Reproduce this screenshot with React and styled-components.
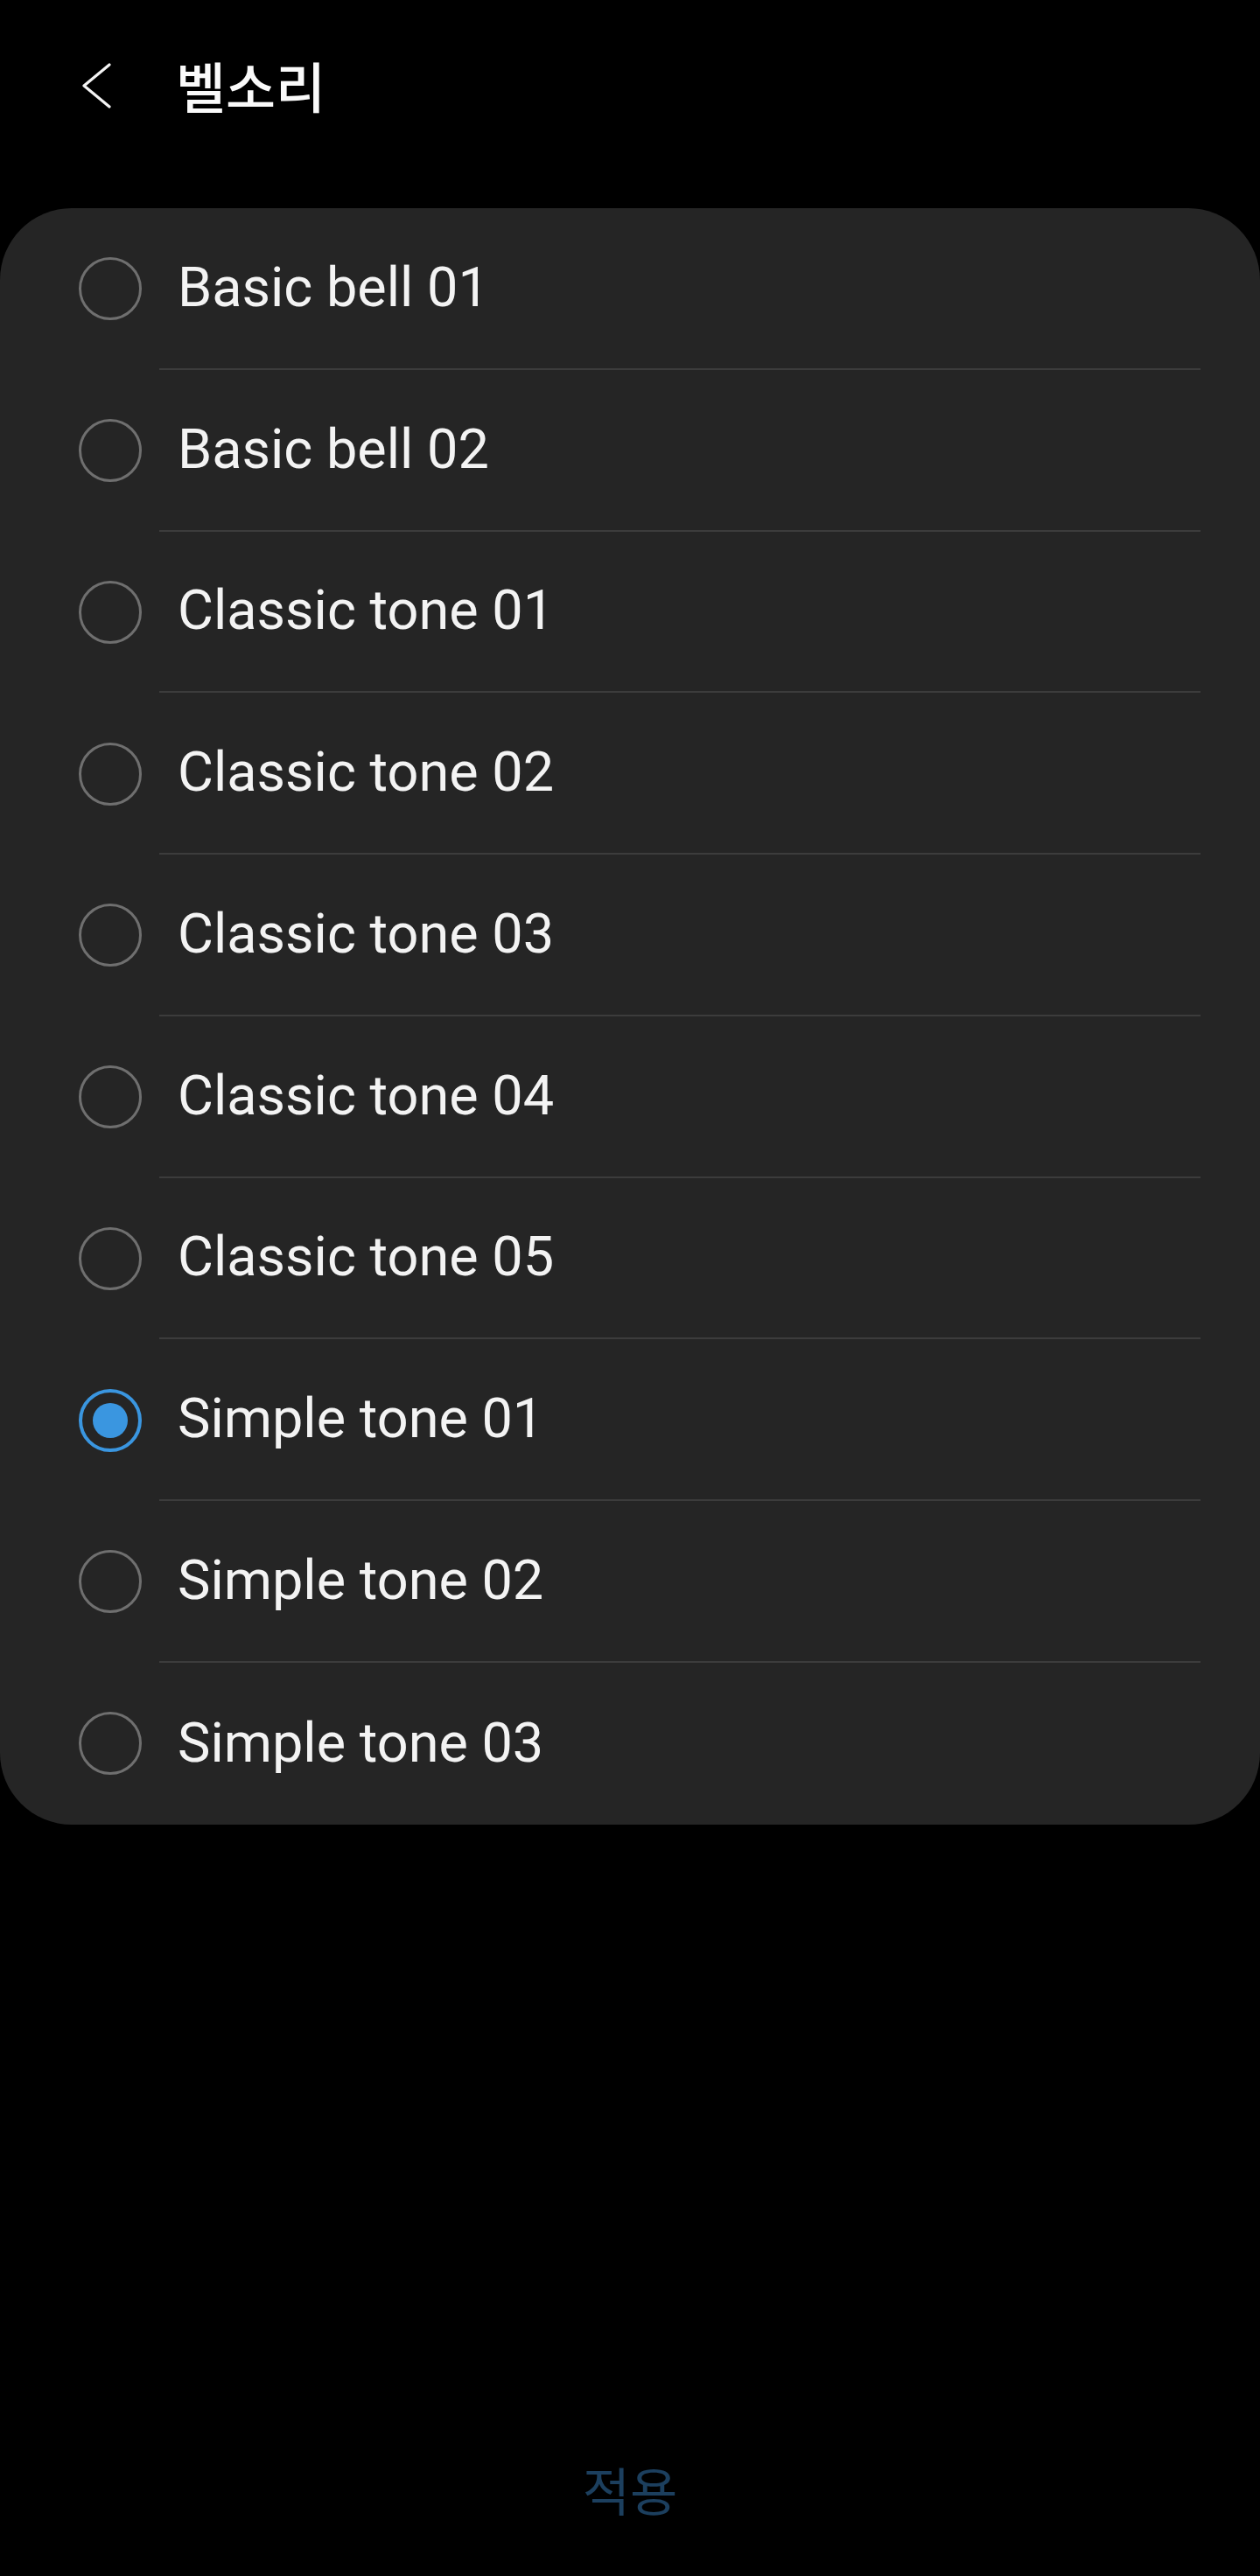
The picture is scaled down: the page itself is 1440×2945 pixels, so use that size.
import React, { useState } from 'react'
import styled, { createGlobalStyle } from 'styled-components'

const GlobalStyle = createGlobalStyle`
    html, body {
        margin: 0;
        padding: 0;
        background: #000;
    }
    * {
        box-sizing: border-box;
    }
`;

const tones = [
    'Basic bell 01',
    'Basic bell 02',
    'Classic tone 01',
    'Classic tone 02',
    'Classic tone 03',
    'Classic tone 04',
    'Classic tone 05',
    'Simple tone 01',
    'Simple tone 02',
    'Simple tone 03',
];

function App() {
    const [selected, setSelected] = useState('Simple tone 01');

    return (
        <Page>
            <GlobalStyle />
            <Header>
                <BackButton aria-label="back">
                    <svg width="34" height="54" viewBox="0 0 34 54" fill="none">
                        <polyline points="31,3 2,27 31,51" stroke="#f4f4f4" strokeWidth="3.2" strokeLinecap="round" strokeLinejoin="round" />
                    </svg>
                </BackButton>
                <Title>벨소리</Title>
            </Header>

            <Card>
                {tones.map((name, i) => (
                    <Row key={name} onClick={() => setSelected(name)}>
                        <Radio checked={selected === name} />
                        <Label last={i === tones.length - 1}>{name}</Label>
                    </Row>
                ))}
            </Card>

            <Footer>
                <ApplyButton>적용</ApplyButton>
            </Footer>
        </Page>
    )
}
export default App;

// page shell
const Page = styled.div`
    min-height: 2945px;
    display: flex;
    flex-direction: column;
    background: #000;
    font-family: Roboto, "Noto Sans", "Noto Sans CJK KR", sans-serif;
`;

const Header = styled.div`
    height: 196px;
    display: flex;
    align-items: center;
    padding-left: 94px;
`;

const BackButton = styled.button`
    background: none;
    border: none;
    padding: 0;
    width: 34px;
    height: 54px;
    display: flex;
    margin-right: 73px;
    cursor: pointer;
`;

const Title = styled.h1`
    margin: 0;
    color: #fafafa;
    font-family: "Noto Sans CJK KR", "Noto Sans", sans-serif;
    font-size: 62px;
    font-weight: 500;
    line-height: 1;
    margin-top: -2px;
`;

// list card
const Card = styled.div`
    margin-top: 42px;
    background: #252525;
    border-radius: 82px;
    overflow: hidden;
`;

const Row = styled.div`
    height: 184.75px;
    display: flex;
    align-items: stretch;
    padding-left: 90px;
    cursor: pointer;
`;

const Radio = styled.span`
    flex: none;
    align-self: center;
    width: 72px;
    height: 72px;
    border-radius: 50%;
    border: ${p => (p.checked ? '4px solid #3a96e0' : '3px solid #6f6f6f')};
    display: flex;
    align-items: center;
    justify-content: center;
    margin-right: 41px;
    &::after {
        content: '';
        display: ${p => (p.checked ? 'block' : 'none')};
        width: 40px;
        height: 40px;
        border-radius: 50%;
        background: #3a96e0;
    }
`;

const Label = styled.div`
    flex: 1;
    display: flex;
    align-items: center;
    margin-right: 68px;
    padding-bottom: 2px;
    margin-left: -21px;
    padding-left: 21px;
    color: #f3f3f3;
    font-size: 63px;
    font-weight: 400;
    border-bottom: ${p => (p.last ? 'none' : '2px solid #3c3c3c')};
`;

// bottom action
const Footer = styled.div`
    margin-top: auto;
    height: 200px;
    display: flex;
    align-items: center;
    justify-content: center;
`;

const ApplyButton = styled.button`
    background: none;
    border: none;
    padding: 0;
    color: #1c3f5e;
    font-family: "Noto Sans CJK KR", "Noto Sans", sans-serif;
    font-size: 59px;
    font-weight: 400;
    line-height: 1;
    cursor: pointer;
`;
